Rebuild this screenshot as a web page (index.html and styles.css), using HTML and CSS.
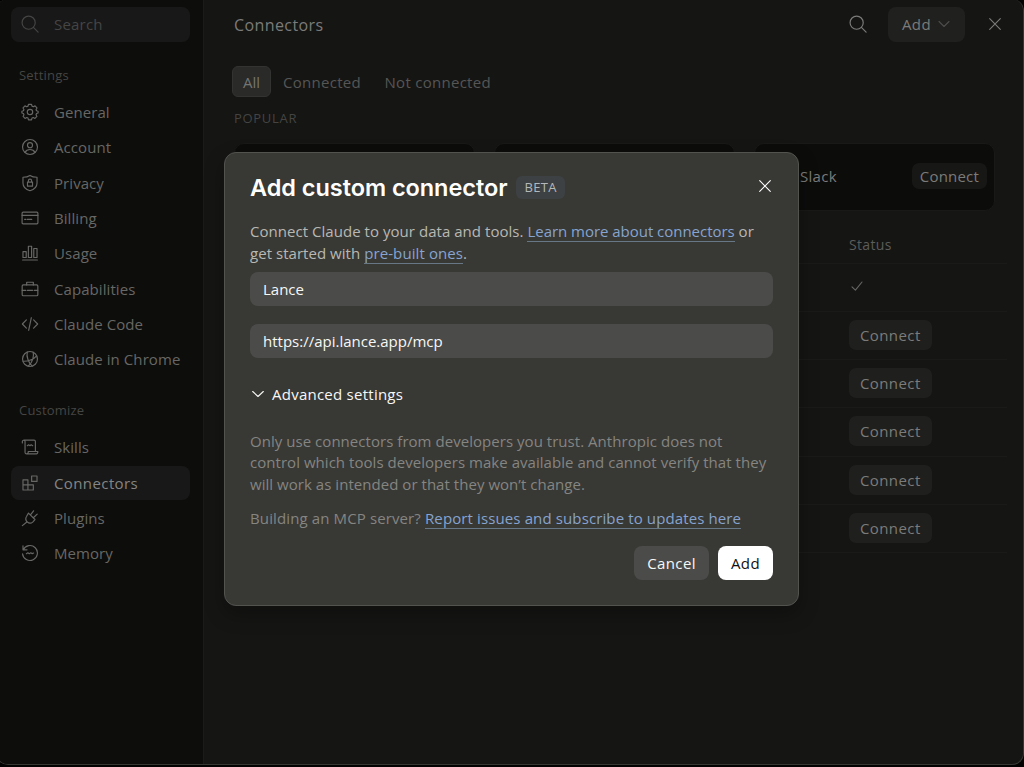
FILE: index.html
```
<!DOCTYPE html>
<html lang="en">
  <head>
    <meta charset="utf-8" />
    <title>Connectors</title>
    <link rel="stylesheet" href="styles.css">
  </head>
  <body>
    <div class="window">
      <!-- Sidebar -->
      <aside class="sidebar">
        <div class="search">
          <svg class="icon" viewBox="0 0 20 20"><circle cx="8.5" cy="8.5" r="7.3"/><path d="M13.8 13.8 19 19"/></svg>
          <span>Search</span>
        </div>

        <div class="group-title">Settings</div>
        <nav>
          <a class="item"><svg class="icon" viewBox="0 0 20 20"><path d="M8.3 1.5h3.4l.5 2 1.5.7 1.9-1 2.1 2.3-1 1.9.6 1.2 1.7.5v2l-1.7.6-.6 1.3 1 1.9-2.2 2.2-1.8-1-1.5.6-.5 2H8.3l-.5-2-1.5-.6-1.8 1-2.2-2.2 1-1.9-.6-1.3-1.7-.6v-2l1.7-.5.6-1.2-1-1.9 2.1-2.3 1.9 1 1.5-.7z"/><circle cx="10" cy="10" r="3"/></svg>General</a>
          <a class="item"><svg class="icon" viewBox="0 0 20 20"><circle cx="10" cy="10" r="8.3"/><circle cx="10" cy="8" r="2.8"/><path d="M4.4 16c1.2-2.3 3-3.2 5.6-3.2s4.4.9 5.6 3.2"/></svg>Account</a>
          <a class="item"><svg class="icon" viewBox="0 0 20 20"><path d="M10 1.6c2.4 1.6 4.8 2 7.8 2V10c0 4.6-3.6 7.4-7.8 8.6C5.8 17.4 2.2 14.6 2.2 10V3.6c3 0 5.4-.4 7.8-2z"/><path d="M7.2 9h5.6v4.5H7.2zM8.2 9V7.5a1.8 1.8 0 0 1 3.6 0V9"/></svg>Privacy</a>
          <a class="item"><svg class="icon" viewBox="0 0 20 20"><rect x="1.2" y="3.5" width="17.6" height="13" rx="1.2"/><path d="M1.2 7h17.6M4 11.5h1.5M7 11.5h5"/></svg>Billing</a>
          <a class="item"><svg class="icon" viewBox="0 0 20 20"><path d="M2.2 8.5h3.6V15H2.2zM8.2 2.5h3.6V15H8.2zM14.2 5h3.6v10h-3.6zM1.8 17.8h16.4"/></svg>Usage</a>
          <a class="item"><svg class="icon" viewBox="0 0 20 20"><rect x="1.3" y="5.5" width="17.4" height="12" rx="1.2"/><path d="M6.3 5.5v-3h7.4v3M1.3 11.5h4M7 11.5h6M14.7 11.5h4"/></svg>Capabilities</a>
          <a class="item"><svg class="icon" viewBox="0 0 20 20"><path d="M6 5.5 1.5 10 6 14.5M14 5.5l4.5 4.5-4.5 4.5M11.5 3l-3 14"/></svg>Claude Code</a>
          <a class="item"><svg class="icon" viewBox="0 0 20 20"><circle cx="10" cy="10" r="8.3"/><path d="M7 2.300c-1.200 4.500 1 11.500 5.500 15.600M13.500 2.500c1.300 4-.5 11.300-5.500 15.500M2.500 12.500c5 .3 11.500-2 14.500-5.800"/></svg>Claude in Chrome</a>
        </nav>

        <div class="group-title customize">Customize</div>
        <nav>
          <a class="item"><svg class="icon" viewBox="0 0 20 20"><path d="M1.5 5.500V4a1.500 1.500 0 0 1 3 0v12c0 1 .8 1.700 1.800 1.700h10.700c1 0 1.700-.8 1.700-2.700H8v1.200c0 1-.8 1.500-1.700 1.500M3 2.400h11.500c1 0 1.500.7 1.500 1.600v11M7 8.500l1.500-1 1.300 1 1.500-1 1.700 1"/></svg>Skills</a>
          <a class="item active"><svg class="icon" viewBox="0 0 20 20"><path d="M2.200 6.500h5.500v11.300H2.200zM2.200 12h11.500v5.800H2.200M11.800 2.200h6v6h-6z"/></svg>Connectors</a>
          <a class="item"><svg class="icon" viewBox="0 0 20 20"><path d="m8.300 4.500 7.200 7.200-2.200 2.600c-2 1.800-4.600 1.800-6.400 0s-1.800-4.500-.6-6.300zM10.500 6.500l3.500-4.500M13.700 9.700l4.300-4M6.500 14.500l-5 4"/></svg>Plugins</a>
          <a class="item"><svg class="icon" viewBox="0 0 20 20"><path d="M2.200 2v4.500h4.500M2.500 6.300A8.300 8.300 0 1 1 1.700 11M6 10.700l1.600-1 1.600 1 1.700-1 1.600 1 1.500-.7"/></svg>Memory</a>
        </nav>
      </aside>

      <!-- Connector list -->
      <main class="content">
        <header class="topbar">
          <h1>Connectors</h1>
          <svg class="icon" viewBox="0 0 20 20"><circle cx="8.5" cy="8.5" r="7.3"/><path d="M13.8 13.8 19 19"/></svg>
          <button type="button" class="add-button">Add <svg class="icon chevron" viewBox="0 0 12 12"><path d="m1 3.500 5 5 5-5"/></svg></button>
          <svg class="icon close" viewBox="0 0 12 12"><path d="m.7.7 10.600 10.600M11.300.7.7 11.300"/></svg>
        </header>

        <div class="tabs">
          <span class="tab selected">All</span>
          <span class="tab">Connected</span>
          <span class="tab">Not connected</span>
        </div>

        <div class="section-title">POPULAR</div>
        <div class="cards">
          <div class="card"></div>
          <div class="card"></div>
          <div class="card">
            <span>Slack</span>
            <button type="button" class="connect">Connect</button>
          </div>
        </div>

        <div class="table">
          <div class="row head"><span>Status</span></div>
          <div class="row"><svg class="icon check" viewBox="0 0 12 12"><path d="m1 6.800 3.400 3.400L11 2"/></svg></div>
          <div class="row"><button type="button" class="connect">Connect</button></div>
          <div class="row"><button type="button" class="connect">Connect</button></div>
          <div class="row"><button type="button" class="connect">Connect</button></div>
          <div class="row"><button type="button" class="connect">Connect</button></div>
          <div class="row"><button type="button" class="connect">Connect</button></div>
        </div>
      </main>
    </div>

    <!-- Add connector dialog -->
    <div class="dialog">
      <div class="dialog-head">
        <h2>Add custom connector</h2>
        <span class="badge">BETA</span>
        <svg class="icon close" viewBox="0 0 12 12"><path d="m.7.7 10.600 10.600M11.300.7.7 11.300"/></svg>
      </div>
      <p class="intro">Connect Claude to your data and tools. <a>Learn more about connectors</a> or<br>get started with <a>pre-built ones</a>.</p>
      <input type="text" class="field" value="Lance">
      <input type="text" class="field" value="https://api.lance.app/mcp">
      <div class="advanced">
        <svg class="icon chevron" viewBox="0 0 12 12"><path d="m.7 3.500 5.300 5 5.300-5"/></svg>
        Advanced settings
      </div>
      <p class="note">Only use connectors from developers you trust. Anthropic does not<br>control which tools developers make available and cannot verify that they<br>will work as intended or that they won’t change.</p>
      <p class="note report">Building an MCP server? <a>Report issues and subscribe to updates here</a></p>
      <div class="actions">
        <button type="button" class="cancel">Cancel</button>
        <button type="button" class="submit">Add</button>
      </div>
    </div>
  </body>
</html>
```
FILE: styles.css
```
* {
  box-sizing: border-box;
}

body {
  margin: 0;
  height: 767px;
  overflow: hidden;
  background: #020202;
  color: #7b7b79;
  font-family: "Open Sans", "Noto Sans", sans-serif;
  font-size: 15px;
}

h1, h2, p {
  margin: 0;
}

button {
  border: none;
  color: inherit;
  font: inherit;
  letter-spacing: 0.4px;
}

.icon {
  flex: none;
  width: 18px;
  height: 18px;
  fill: none;
  stroke: currentColor;
  stroke-width: 1.3;
  stroke-linecap: round;
  stroke-linejoin: round;
}

/* App window */
.window {
  display: flex;
  height: 766px;
  margin: -1px 0 0 -4px;
  border: 1px solid #363633;
  border-top: none;
  border-radius: 12px;
  background: #151514;
  overflow: hidden;
}

/* Sidebar */
.sidebar {
  width: 207px;
  padding: 8px 13px 0 14px;
  border-right: 1px solid #1b1b1a;
  background: #0d0d0b;
  color: #676765;
}

.search, .item {
  display: flex;
  align-items: center;
  gap: 15px;
  height: 34px;
  padding-left: 10px;
  border-radius: 8px;
}
.search {
  height: 35px;
  padding-bottom: 1px;
  background: #181818;
  color: #454544;
  letter-spacing: 0.2px;
}
.item {
  margin-bottom: 1.35px;
  letter-spacing: 0.07px;
}
.item.active {
  background: #181818;
  color: #858583;
  letter-spacing: 0.4px;
}
.item.active .icon {
  color: #676765;
}

.group-title {
  height: 20px;
  margin: 23px 0 10px 8px;
  color: #454543;
  font-size: 13px;
  letter-spacing: 0.2px;
  line-height: 20px;
}
.group-title.customize {
  margin-top: 24px;
}

/* Main column */
.content {
  flex: 1;
  padding: 8px 16px 0 27px;
}

.topbar {
  display: flex;
  align-items: center;
  height: 35px;
  padding: 0 6px 1px 3px;
}
.topbar h1 {
  flex: 1;
  padding-top: 1px;
  font-size: 16px;
  font-weight: 400;
  letter-spacing: 0.4px;
}
.add-button {
  display: flex;
  align-items: center;
  gap: 7px;
  height: 35px;
  margin: 1px 24px 0 21px;
  padding: 0 15px 1px 14px;
  border-radius: 8px;
  background: #20201f;
}
.add-button .chevron {
  color: #4c4c4a;
}
.chevron, .close, .check {
  width: 12px;
  height: 12px;
  stroke-width: 1.1;
}

.tabs {
  display: flex;
  height: 31px;
  margin: 24px 0 0 1px;
  line-height: 29px;
  color: #565654;
}
.tab {
  padding: 1px 10.5px 0 11px;
  border: 1px solid transparent;
  border-radius: 6px;
  letter-spacing: 0.28px;
}
.tab.selected {
  padding: 1px 10px 0;
  border-color: #333332;
  background: #2a2a29;
  color: #747472;
  letter-spacing: 0;
}

.section-title {
  margin: 11px 0 0 3px;
  height: 20px;
  color: #444442;
  font-size: 13px;
  letter-spacing: 0.7px;
  line-height: 20px;
}

.cards {
  display: grid;
  grid-template-columns: repeat(3, 1fr);
  gap: 19px;
  width: 761px;
  margin: 15px 0 0 3px;
}
.card {
  display: flex;
  align-items: center;
  justify-content: space-between;
  height: 68px;
  padding: 0 7px 2px 45px;
  border: 1px solid #191918;
  border-radius: 10px;
  background: #0c0c0b;
}
.card span {
  letter-spacing: 0.3px;
}

.connect {
  height: 30px;
  padding: 0 11px;
  border-radius: 7px;
  background: #1f1f1e;
}
.card .connect {
  height: 26px;
  padding: 0 8px;
  background: #171716;
  line-height: 24px;
  letter-spacing: 0.2px;
}

/* Status column starts right of the names */
.table {
  margin-top: 17px;
}
.row {
  display: flex;
  align-items: center;
  height: 48.15px;
  padding: 0 0 1px 618px;
  border-bottom: 1px solid #1a1a19;
}
.row.head {
  height: 36px;
  padding-bottom: 2px;
  color: #5c5c5a;
  font-size: 14px;
  letter-spacing: 0.35px;
}
.row .check {
  margin: -2px 0 0 2px;
  color: #666664;
}

/* Dialog */
.dialog {
  position: absolute;
  top: 152px;
  left: 224px;
  width: 575px;
  height: 454px;
  padding: 20px 25px;
  border: 1px solid #52524f;
  border-radius: 12px;
  background: #383835;
  box-shadow: 0 8px 20px rgba(0, 0, 0, 0.3);
  color: #b8b8b3;
  letter-spacing: 0.04px;
}

.dialog-head {
  display: flex;
  align-items: center;
  height: 28px;
  color: #fff;
}
.dialog-head h2 {
  font-family: Inter, sans-serif;
  font-size: 23.5px;
  font-weight: 600;
  letter-spacing: -0.05px;
}
.badge {
  margin-left: 9px;
  padding: 0 8px;
  border-radius: 6px;
  background: #3d4144;
  color: #b5b8b9;
  font-size: 13px;
  letter-spacing: 0.3px;
  line-height: 23px;
}
.dialog-head .close {
  margin: -2px 2.5px 0 auto;
}

.intro {
  margin-top: 20px;
  line-height: 21.5px;
}
.dialog a {
  border-bottom: 1px solid #687785;
  color: #86a4cf;
}
.intro a:first-child {
  letter-spacing: -0.03px;
}
.intro a:last-child {
  letter-spacing: 0.1px;
}

.field {
  display: block;
  width: 100%;
  height: 34px;
  margin-top: 8px;
  padding: 0 13px;
  border: none;
  border-radius: 8px;
  background: #4b4b49;
  color: #f7f7f5;
  font: inherit;
  letter-spacing: 0;
}
.field + .field {
  margin-top: 17.5px;
}

.advanced {
  display: flex;
  align-items: center;
  gap: 8px;
  height: 22px;
  margin: 25px 0 26px 2px;
  color: #f7f7f5;
  letter-spacing: 0.25px;
}

.note {
  color: #858581;
  line-height: 21.5px;
}
.report {
  margin-top: 13px;
  letter-spacing: 0.12px;
}

.actions {
  display: flex;
  justify-content: flex-end;
  gap: 9px;
  margin-top: 16px;
}
.actions button {
  height: 34px;
  padding: 0 13px;
  border-radius: 8px;
}
.actions .cancel {
  background: #4b4b49;
  color: #f7f7f5;
}
.actions .submit {
  background: #fff;
  color: #111;
}
```
